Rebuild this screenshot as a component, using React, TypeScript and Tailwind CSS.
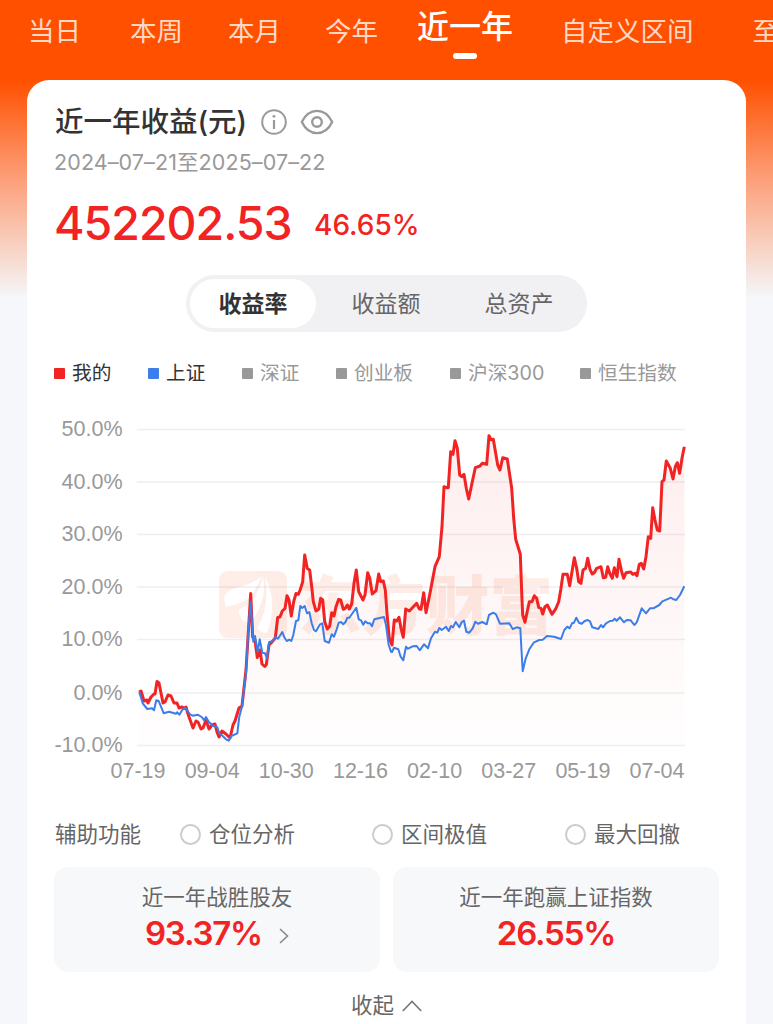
const periods = [
  { label: '当日', left: 'ml-[28px]' },
  { label: '本周', left: 'ml-[49px]' },
  { label: '本月', left: 'ml-[45px]' },
  { label: '今年', left: 'ml-[44px]' },
  { label: '近一年', left: 'ml-[39px]', active: true },
  { label: '自定义区间', left: 'ml-[48px]' },
  { label: '至', left: 'ml-[59px]' },
]

const legend = [
  { label: '我的', dot: 'bg-[#f22323]', text: 'text-[#333]', width: 'w-[94px]' },
  { label: '上证', dot: 'bg-[#3b7de9]', text: 'text-[#333]', width: 'w-[94px]' },
  { label: '深证', dot: 'bg-[#999]', text: 'text-[#999]', width: 'w-[94px]' },
  { label: '创业板', dot: 'bg-[#999]', text: 'text-[#999]', width: 'w-[114px]' },
  { label: '沪深300', dot: 'bg-[#999]', text: 'text-[#999]', width: 'w-[130px]' },
  { label: '恒生指数', dot: 'bg-[#999]', text: 'text-[#999]', width: 'w-[100px]' },
]

const yTicks = [
  { label: '50.0%', y: 429.5 },
  { label: '40.0%', y: 482 },
  { label: '30.0%', y: 534.5 },
  { label: '20.0%', y: 587 },
  { label: '10.0%', y: 639.5 },
  { label: '0.0%', y: 693 },
  { label: '-10.0%', y: 745.5 },
]

const xTicks = ['07-19', '09-04', '10-30', '12-16', '02-10', '03-27', '05-19', '07-04']

const mine =
  '139,692 141,691 144,701 147,700 148,703 151,697 154,694 155,694 157,681.5 159,683 163,703 165,702 168,695 171,696 174,703 177,703 179,708 182,707 184,708.5 186,707 188,714 193,728 196,721 198,722 201,729 203,728 206,720 209,729 212,725 215,724 217,732 219,737 222,731 226,734 230,738 233,725 235,721 239,708 242,706 246,670 ' +
  '250.7,593.5 252.7,637 255,640 257.3,657.5 260,650 262,664 264.7,666.5 266.3,664.7 269,645 271.3,642.7 275.3,638 277.7,617.5 280,617 282.3,611 285,608.5 287,595.7 289,600 291.3,616 293.7,601.7 296,593.5 298.3,594.3 300.3,589.5 302.7,581.7 304.7,555 307.3,568.5 309.7,570 311.7,586.7 313.3,601.7 316,611 318.7,609.3 320.7,598.3 322.7,600 324.7,621.7 327.3,629 329.7,626 331.7,612.7 334,616 336,606.7 338.7,599.3 ' +
  '340.7,600 343.3,609.3 345.3,608.3 347.3,605 349.3,609 351.7,604 354,583.3 356.3,570 358.7,591.7 363,600 365,595 367.7,572.7 369.7,578 372.3,594 376,590.7 378.7,574 380.7,581.7 383.3,581 385.3,590 387,613.3 389.3,638.3 392,645 394.3,620 396.7,621 399,617.3 401,628.3 403.3,637.3 405.7,609 409.3,611 416.7,603.3 419.3,609 421,609.3 423.7,592.7 426,612.7 430,593.3 435,566.7 439.3,556.7 ' +
  '442,526.7 444,486.7 446.7,487.7 448.3,487.7 450.7,451.7 453,454.3 455,440.7 457.3,448.3 459.7,475 461.7,476.7 464,474.3 466.3,488.3 468.7,499 472.3,481.7 475.3,467.7 480,466 482.3,463.3 486.7,464.3 489,435.7 491,439.7 493.3,439.3 496,455 497.7,465 500,470 502.7,457.7 507.3,459 509.7,475 511.7,488.3 513.7,518.3 515.7,539.3 520.3,554.3 522,600 522.7,615 525,622.3 ' +
  '529.3,601.7 532,601.7 534.3,595.7 536.7,598.3 538.7,607.3 541,608.3 542.7,614 545,606.7 547.3,605 552,614.3 556,608.3 558.7,601.7 560.7,590 563,574.3 567.3,574.3 569.7,585.7 574.3,557.7 576.7,568.3 578.7,581.7 581,583.3 583,570 585.7,568.3 587.7,558.3 590,569.3 592.3,574 594.3,572.7 596.7,568.3 601,566.7 603.3,577.7 605.7,577.3 607.7,566.7 609.7,573.3 612.3,578.3 614.3,567.7 617,576.7 619,559.3 ' +
  '621.7,571.7 623.7,578.3 626,572.7 630.7,572 632.7,574.3 635,573.3 637,575.7 639.3,564.3 641.3,563.3 643.7,569 646,556.7 648.3,536.7 650.7,538.3 652.7,507.7 655,520 657.3,530 659.7,531 662,481.7 664,480 666.3,461 670.3,468.3 673,479 675.3,466.7 677.3,462.7 679.7,473.3 682,458.3 684.3,446.7'

const shanghai =
  '139.3,692.3 142.7,703.3 147.3,709 152,708.3 154,710.3 156.3,700.3 158.7,701 161,706.7 163.7,713.3 169,711.7 176,713.7 177.3,712.3 179.3,714.7 182.7,709.3 185.3,708 190,714.3 192.7,715.7 197.7,714.7 201.7,717 204,720.3 206,717 208.7,721.7 212.7,725.7 217.3,727.3 219.3,733.3 222.7,736 226,739.3 228.7,740.7 231.3,736 237.3,733.3 239.3,716.7 241.7,707.7 246,673.3 248.3,630 250.7,601.7 253.3,641.7 255,636 257.7,651.7 259.7,639.3 262.3,652.7 265,653.3 267,658.3 269,642.3 ' +
  '272.7,641 275.7,636.7 278,638.7 282.3,632 284.3,637.3 286.7,641 289.3,639.7 291.3,641 293.3,635 296,621 298.3,620.3 300.3,606 302.3,608 304.7,606 307,613.3 309.3,612 311.7,623.3 314,630 316,631.3 320,624.3 322.3,623.3 324.7,641 329,642.7 331.7,634.3 334,636.7 336.7,629.3 338.7,622.7 341,622 343.3,624.3 345.7,621.7 347.3,617.7 349.3,617.7 356.3,607.7 358.7,619.3 361,620.3 363.3,624.7 365.3,621.3 367.7,623.3 370,623.3 372,626.3 374.3,619.3 384,617 ' +
  '386,625 388.7,645 391,651.7 392,652 394,647.7 398.3,649.3 400.7,656.7 403.3,660.3 406,646.7 408,648.7 412.7,646.3 416.7,646 419.7,650.3 424,644.3 428,648.3 431,638.3 435,631.7 437.3,632.7 439.3,628 441.7,630 446,626.7 448.7,631 451,626 453,627.3 455.7,622 459.3,627.3 461.7,622 464,620.7 466.3,631.7 469.3,632.7 472.7,628.3 475.3,621.7 478,623.7 482.3,622 486.7,624.3 489,615 493.3,612.7 496,614.3 500,623.7 509.3,623.3 512.7,629 516.7,627.3 520.3,628.3 521.3,646.7 522.7,671.3 ' +
  '525.7,658.3 529.3,649.3 534,642.3 539.3,640 542.7,639.7 547,636 554,636.7 561,639 564.3,630 567.3,626.7 569.7,628.3 572,623.3 574,622.7 576.3,617.7 579,622.7 581.7,623.7 584.7,621 587.7,620 590,621.3 592.3,627.3 598.3,629 601,625 603,627.3 606,623.3 610,621 612.7,620.7 614.7,618.7 616.7,620.7 620,617.3 624,622.3 626.7,620 630.7,620.3 634.3,625 636.7,622.3 641.7,608.3 646,613.3 650,608.3 653.3,608.3 659.3,605 662.3,601.3 671,597.7 673.3,599.3 676.3,600 680,595 684.3,586.3'

function InfoIcon() {
  return (
    <svg width="26" height="26" viewBox="0 0 26 26" fill="none" stroke="#999" strokeWidth="2">
      <circle cx="13" cy="13" r="11.8" />
      <path d="M13 11V20" strokeWidth="2.2" />
      <circle cx="13" cy="7.3" r="1.4" fill="#999" stroke="none" />
    </svg>
  )
}

function EyeIcon() {
  return (
    <svg width="34" height="26" viewBox="0 0 34 26" fill="none" stroke="#999" strokeWidth="2.4">
      <path d="M1.8 13C5.5 5.5 10.5 1.9 17 1.9S28.5 5.5 32.2 13C28.5 20.500 23.5 24.1 17 24.1S5.5 20.5 1.8 13Z" strokeLinejoin="round" />
      <circle cx="17" cy="13" r="4.8" />
    </svg>
  )
}

function Chart() {
  return (
    <svg width="718" height="390" viewBox="27 400 718 390" className="block font-['Liberation_Sans','Noto_Sans_CJK_SC',sans-serif]">
      <defs>
        <linearGradient id="area" x1="0" y1="436" x2="0" y2="745" gradientUnits="userSpaceOnUse">
          <stop offset="0" stopColor="#f22323" stopOpacity="0.08" />
          <stop offset="1" stopColor="#f22323" stopOpacity="0.005" />
        </linearGradient>
      </defs>
      {yTicks.map(t => (
        <g key={t.label}>
          <line x1="137" x2="685" y1={t.y} y2={t.y} stroke="#eeeef3" strokeWidth="1.4" />
          <text x="122.5" y={t.y + 6.5} textAnchor="end" fontSize="21.5" fill="#999">{t.label}</text>
        </g>
      ))}
      <polygon points={`139,745 ${mine} 684.3,745`} fill="url(#area)" />
      {/* brand watermark */}
      <g fill="#f5662c" opacity="0.115">
        <path
          fillRule="evenodd"
          d="M229 571H277Q287 571 287 581V628Q287 638 277 638H229Q219 638 219 628V581Q219 571 229 571ZM225 595Q228 589 240 587Q252 584 262 576Q257 588 249 598Q241 604 226 607Q223 600 225 595ZM239 610Q257 601 263 577Q268 600 250 623Q247 625 247 622Q239 620 239 610ZM265 577Q276 597 270 624Q268 633 265 633Q262 633 257 628Q270 607 265 577Z"
        />
        <text x="298" y="629" fontSize="63.5" fontWeight="900" textLength="255">东方财富</text>
      </g>
      <polyline points={mine} fill="none" stroke="#f22323" strokeWidth="3" strokeLinejoin="round" />
      <polyline points={shanghai} fill="none" stroke="#3b7de9" strokeWidth="2" strokeLinejoin="round" />
      {xTicks.map((t, i) => (
        <text key={t} x={138 + i * 74.15} y="777.5" textAnchor="middle" fontSize="21.5" fill="#999">{t}</text>
      ))}
    </svg>
  )
}

function Option({ label, className }: { label: string; className: string }) {
  return (
    <div className={`flex items-center gap-2 ${className}`}>
      <span className="h-[21px] w-[21px] rounded-full border-2 border-[#ccc]" />
      <span>{label}</span>
    </div>
  )
}

export default function App() {
  return (
    <div className="h-[1024px] w-[773px] overflow-hidden bg-[#f5f7fa] font-[Inter,'Noto_Sans_CJK_SC',sans-serif] whitespace-nowrap">
      <div className="h-full bg-[linear-gradient(180deg,#ff5000_0px,#ff5000_80px,#fca07a_180px,#f5f7fa_298px)]">
        <nav className="flex h-20 items-start text-[26.5px] leading-[38px] text-[#ffd9c6]">
          {periods.map(p => (
            <div key={p.label} className={`shrink-0 ${p.left}`}>
              {p.active ? (
                <div className="flex w-[96px] flex-col items-center pt-2 text-[32px] font-medium text-white">
                  <span>{p.label}</span>
                  <span className="mt-[7px] h-[6px] w-[24px] rounded-full bg-white" />
                </div>
              ) : (
                <div className="pt-3">{p.label}</div>
              )}
            </div>
          ))}
        </nav>

        <main className="mx-[27px] h-[944px] w-[719px] overflow-hidden rounded-t-[22px] bg-white">
          <div className="flex h-[62px] items-center pt-[22px] pl-[28px]">
            <h1 className="w-[206px] pt-px text-[28.5px] font-medium text-[#333]">近一年收益(元)</h1>
            <InfoIcon />
            <span className="ml-[13px]"><EyeIcon /></span>
          </div>
          <div className="flex h-10 items-center pl-[27px] text-[21.5px] tracking-[0.1px] text-[#999]">2024–07–21至2025–07–22</div>
          <div className="flex h-[93px] items-start pl-[27px] text-[#f22323]">
            <span className="w-[260px] pt-[14px] text-[46.5px] leading-[54px] font-medium tracking-[-1px]">452202.53</span>
            <span className="pt-[24px] text-[28px] leading-[38px] font-medium">46.65%</span>
          </div>

          <div className="mx-auto flex h-[57px] w-[401px] items-center rounded-full bg-[#f1f1f4] p-1 text-[23px] text-[#666]">
            <div className="flex h-[49px] w-[126px] items-center justify-center rounded-full bg-white pt-px font-bold text-[#333]">收益率</div>
            <div className="w-[140px] pt-px text-center">收益额</div>
            <div className="w-[126px] pt-px text-center">总资产</div>
          </div>

          <div className="flex h-[68px] items-center pt-[15px] pl-[27px] text-[19.7px]">
            {legend.map(l => (
              <div key={l.label} className={`flex shrink-0 items-center gap-[7px] ${l.width} ${l.text}`}>
                <span className={`h-[11px] w-[11px] rounded-[1px] ${l.dot}`} />
                <span className="pt-px">{l.label}</span>
              </div>
            ))}
          </div>

          <Chart />

          <div className="flex h-[77px] items-center pt-[12px] pl-[28px] text-[21.5px] text-[#666]">
            <span className="w-[125px]">辅助功能</span>
            <Option label="仓位分析" className="w-[192px]" />
            <Option label="区间极值" className="w-[193px]" />
            <Option label="最大回撤" className="" />
          </div>

          <div className="flex gap-[13px] pl-[27px]">
            <div className="flex h-[105px] w-[326px] flex-col items-center rounded-[14px] bg-[#f7f8fa] pt-[14px]">
              <span className="text-[21.5px] leading-8 text-[#666]">近一年战胜股友</span>
              <div className="flex items-center gap-[17px] pt-px text-[33px] leading-[38px] font-semibold tracking-[-1.2px] text-[#f22323]">
                93.37%
                <svg width="10" height="16" viewBox="0 0 10 16" fill="none" stroke="#888" strokeWidth="1.6" className="mt-[5px]">
                  <path d="M1 1L8.5 8L1 15" />
                </svg>
              </div>
            </div>
            <div className="flex h-[105px] w-[326px] flex-col items-center rounded-[14px] bg-[#f7f8fa] pt-[14px]">
              <span className="text-[21.5px] leading-8 text-[#666]">近一年跑赢上证指数</span>
              <span className="pt-px text-[33px] leading-[38px] font-semibold tracking-[-1.2px] text-[#f22323]">26.55%</span>
            </div>
          </div>

          <div className="flex items-center justify-center gap-2 pt-[17px] text-[21.5px] leading-8 text-[#666]">
            收起
            <svg width="20" height="12" viewBox="0 0 20 12" fill="none" stroke="#777" strokeWidth="1.6" className="mt-px">
              <path d="M0.8 11L10 1.5L19.2 11" />
            </svg>
          </div>
        </main>
      </div>
    </div>
  )
}
